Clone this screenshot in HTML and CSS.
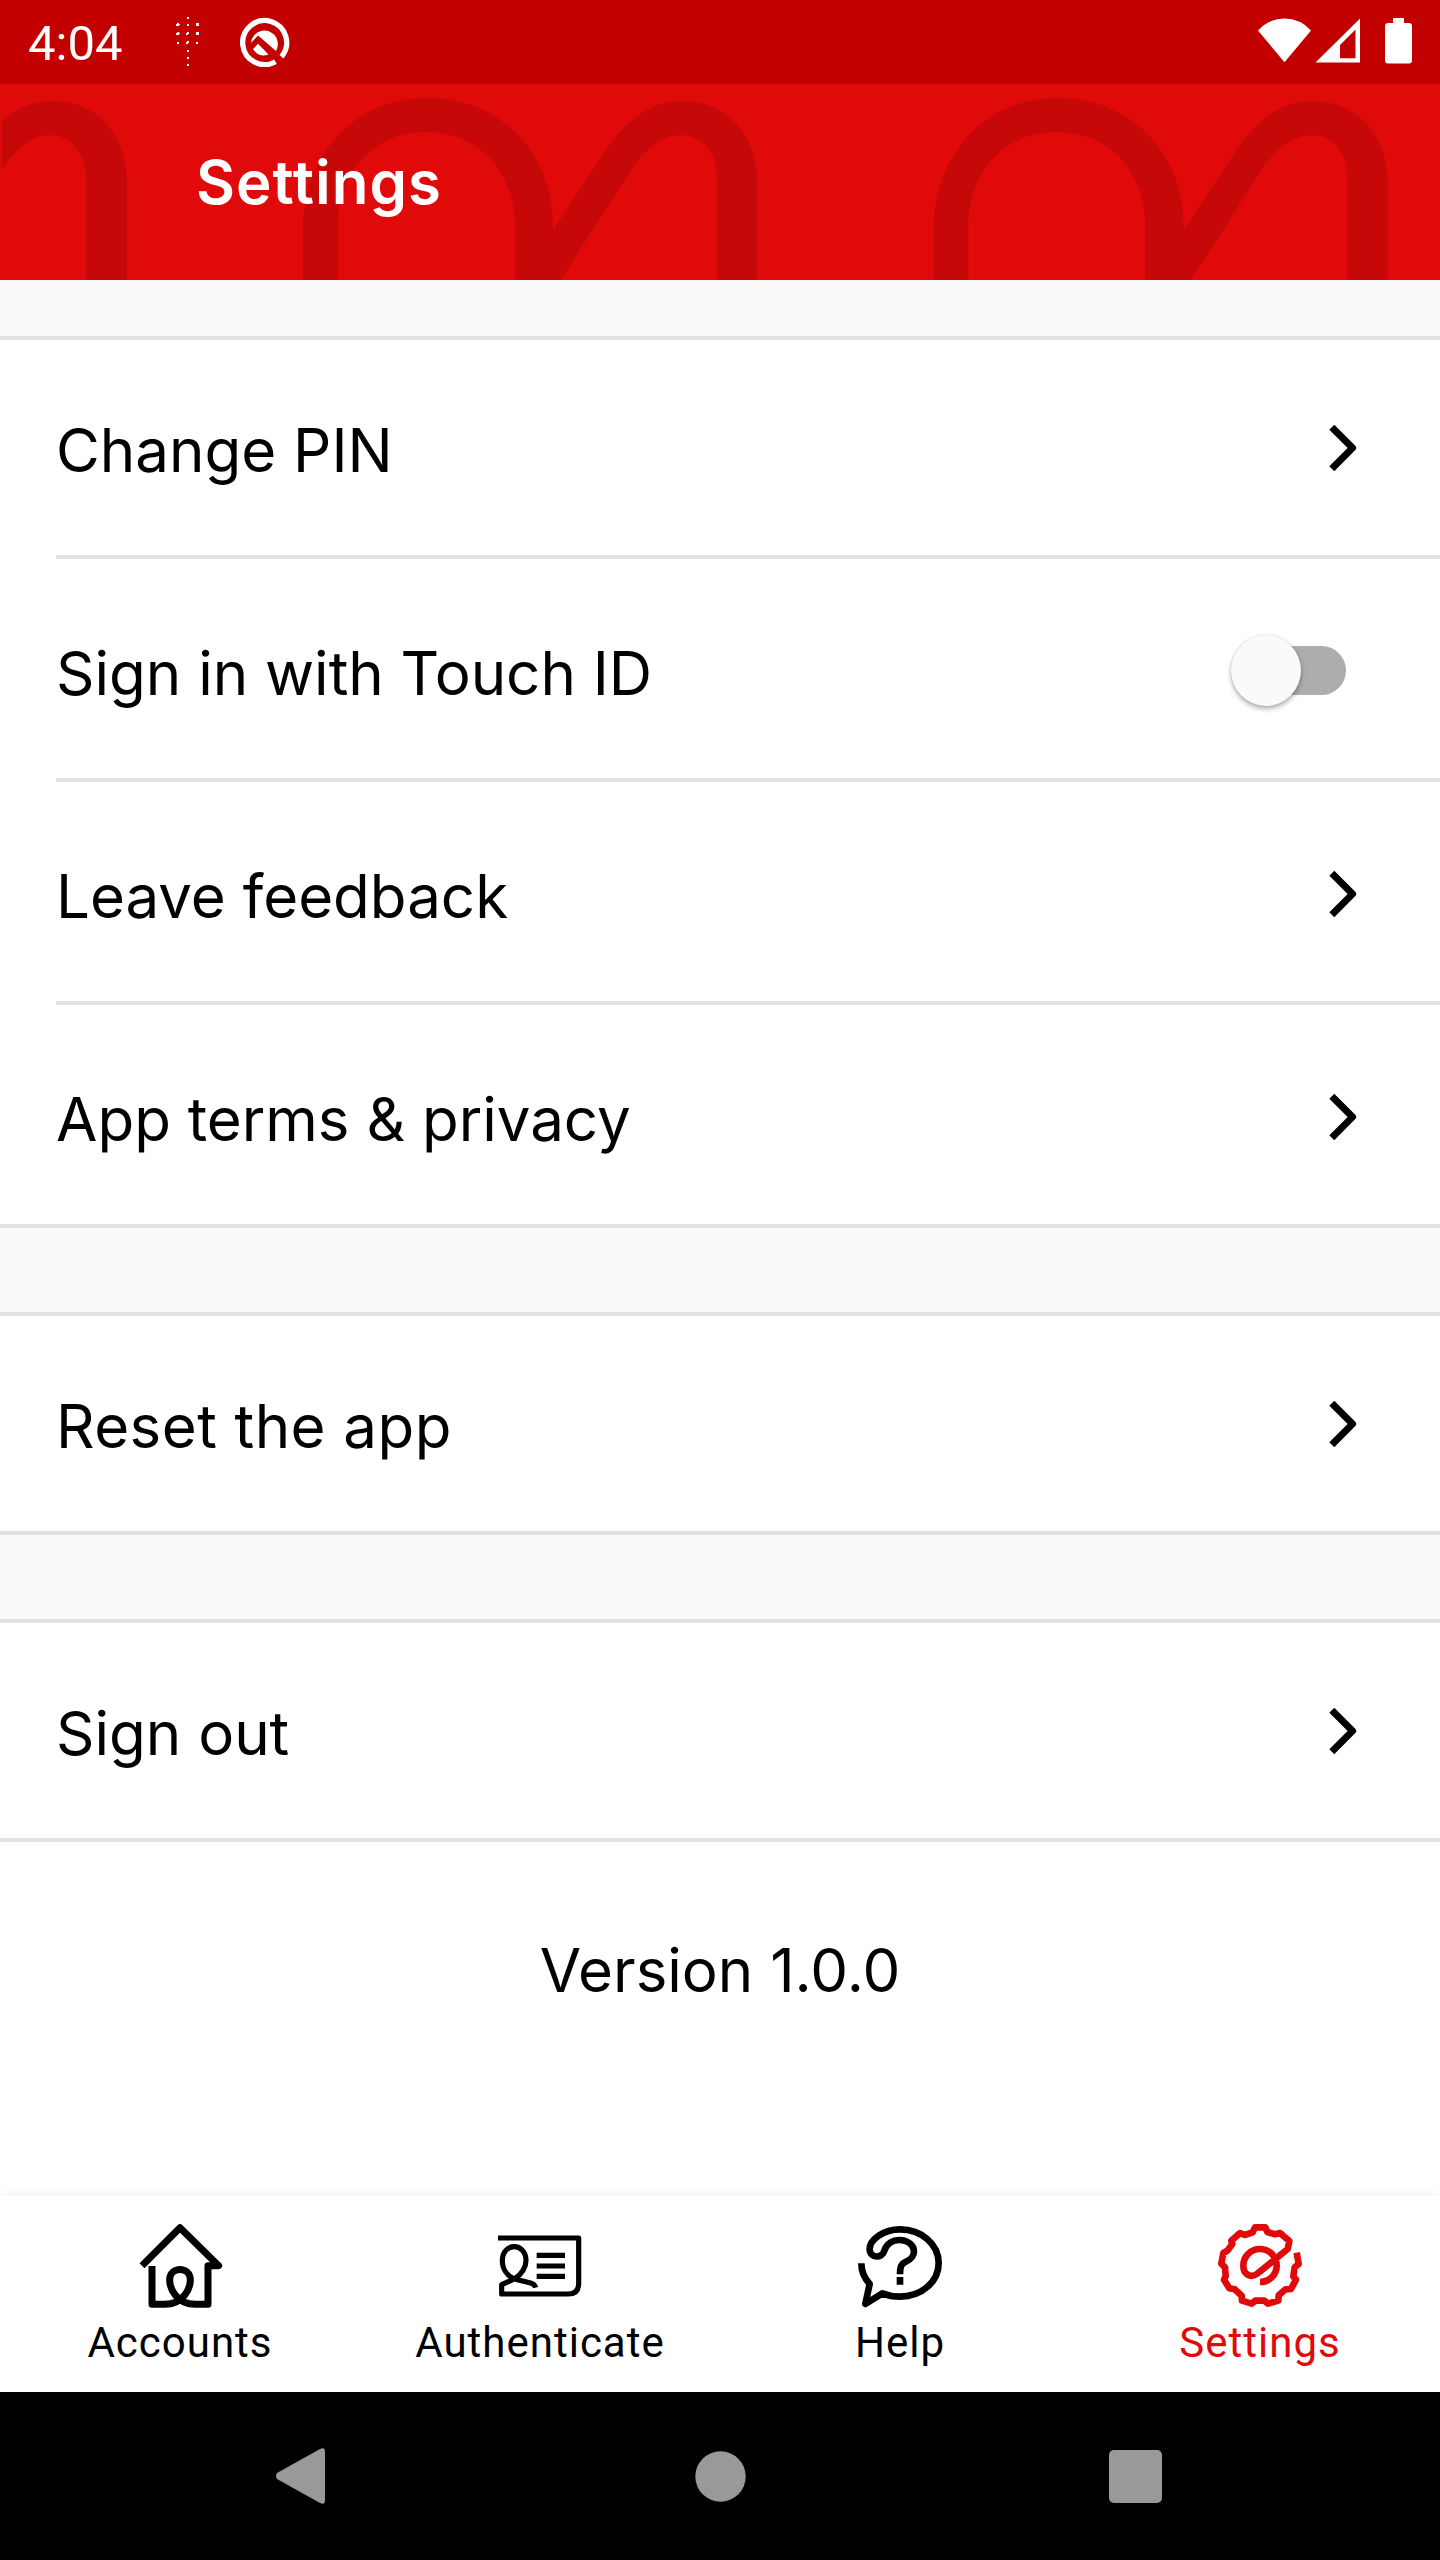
FILE: index.html
```html
<!DOCTYPE html>
<html lang="en">
<head>
<meta charset="utf-8">
<title>Settings</title>
<link rel="stylesheet" href="styles.css">
</head>
<body>
<div class="screen">
  <div class="status-bar">
    <span class="clock">4:04</span>
    <svg class="dots-icon" width="24" height="50" viewBox="0 0 24 50">
      <path d="M11 0h2v2h-2zM0 7h1v-1h2v1h1v1H3v1H0zM11 7h2v2h-2zM20 6h3v3h-3zM0 16h1v-1h2v1h1v1H3v1H0zM10 16h1v-1h2v2h-1v1h-2zM20 15h3v3h-3zM1 25h2v2H1zM10 25h1v-1h2v2h-1v1h-2zM20 25h2v2h-2zM11 33h2v2h-2zM11 40h2v2h-2zM11 47h2v2h-2z"/>
    </svg>
    <svg class="q-icon" width="50" height="50" viewBox="240 17 50 50">
      <path class="ring" d="M275.500 61.700A22 22 0 1 1 281.500 56.700"/>
      <path d="M251 43a13.500 13.500 0 0 1 25.500-5q3 7-.5 13L258 35.500zM258 43.800L268.500 54.500Q259 58 253 49z"/>
    </svg>
    <svg class="signal-icons" width="156" height="48" viewBox="1257 18 156 48">
      <path d="M1258 31.500Q1269 19.500 1284.500 19.500T1311 31.500L1284.500 63.300z"/>
      <path fill-rule="evenodd" d="M1315.500 63.500L1360 19.500V63.500zM1340 59.300H1355.500V30.500L1340 46z"/>
      <path d="M1393 19h11v5h5q3 0 3 3v34.500q0 3-3 3h-21q-3 0-3-3V27q0-3 3-3h5z"/>
    </svg>
  </div>
  <header class="app-header">
    <svg class="pattern" width="1440" height="196" viewBox="0 84 1440 196">
      <defs>
        <path id="arches" d="M303 280V230C303 160 350 98 427 98C505 98 553 158 553 224V230.500L602 156C622 125 647 101 682 101C729 101 757 138 757 181V280H717V177C717 153 702 135 681 135C662 135 645 149 631 170L560.500 280H515V226C515 176 483 132 426 132C371 132 337.700 175 337.700 226V280Z"/>
      </defs>
      <path d="M2 120.500C17 108 33 101 54 101C99 101 127 138 127 181V280H86V177C86 153 71 135 50 135C31 135 16 148 2 170Z"/>
      <use href="#arches"/>
      <use href="#arches" x="630.500"/>
    </svg>
    <h1 class="title">Settings</h1>
  </header>
  <main class="content">
    <section class="group">
      <div class="row"><span class="label">Change PIN</span><svg class="chevron" width="30" height="51" viewBox="0 0 30 51"><path d="M3.800 5.200L24.600 25.900 3.800 46.700"/></svg></div>
      <div class="row"><span class="label">Sign in with Touch ID</span><span class="switch"><span class="knob"></span></span></div>
      <div class="row"><span class="label">Leave feedback</span><svg class="chevron" width="30" height="51" viewBox="0 0 30 51"><path d="M3.800 5.200L24.600 25.900 3.800 46.700"/></svg></div>
      <div class="row"><span class="label">App terms &amp; privacy</span><svg class="chevron" width="30" height="51" viewBox="0 0 30 51"><path d="M3.800 5.200L24.600 25.900 3.800 46.700"/></svg></div>
    </section>
    <section class="group">
      <div class="row"><span class="label spaced">Reset the app</span><svg class="chevron" width="30" height="51" viewBox="0 0 30 51"><path d="M3.800 5.200L24.600 25.900 3.800 46.700"/></svg></div>
    </section>
    <section class="group">
      <div class="row"><span class="label">Sign out</span><svg class="chevron" width="30" height="51" viewBox="0 0 30 51"><path d="M3.800 5.200L24.600 25.900 3.800 46.700"/></svg></div>
    </section>
  </main>
  <footer class="version">Version 1.0.0</footer>
  <nav class="tabs">
    <a class="tab">
      <svg class="tab-icon" viewBox="174 132 252 252" stroke-width="21"><path d="M186 257L300 143L416 257H384V373H345C290 373 269 325 269 300C269 258 331 258 331 300C331 325 310 373 255 373H216V258"/></svg>
      <span>Accounts</span>
    </a>
    <a class="tab">
      <svg class="tab-icon" viewBox="294 132 252 252" stroke-width="15.500"><path d="M294 174H536V310Q536 342 505 342H305V314L343 297C366 283 378 260 378 242C378 186 307 186 307 242C307 266 321 287 343 297L392 309Q404 312 407 323M410 226H495M410 258H495M410 289H495"/></svg>
      <span>Authenticate</span>
    </a>
    <a class="tab">
      <svg class="tab-icon" viewBox="174 132 252 252" stroke-width="20"><path d="M184 250C184 280 196 298 209 312L196 372L247 340C262 346 280 350 300 350C365 350 416 305 416 249C416 193 365 148 300 148C250 148 209 180 209 207C209 236 247 236 253 212C260 190 280 180 297 180C325 180 342 197 342 214C342 234 327 241 316 246C303 252 300 262 300 283M300 291V314"/></svg>
      <span>Help</span>
    </a>
    <a class="tab active">
      <svg class="tab-icon" viewBox="174 132 252 252" stroke-width="20"><path d="M410 218L416 252L404 262L400 289L408 299L393 327L377 328L356 346L355 362L324 371L313 362H286L275 371L246 362L245 347L224 328L208 325L192 299L197 289L195 262L184 251L190 219L202 212L217 192L214 182L240 159L254 165L278 157L285 142H316L322 156L345 163L360 159L388 183L383 207L292 281C270 297 250 281 250 257C250 229 272 207 300 207C328 207 350 229 350 257C350 284 328 306 300 306"/></svg>
      <span>Settings</span>
    </a>
  </nav>
  <div class="system-nav">
    <svg width="49" height="56" viewBox="0 0 49 56"><path d="M1 25L44 1Q49-1.500 49 4V52Q49 57.500 44 55L1 31Q-1 28 1 25z"/></svg>
    <svg class="home" width="51" height="51" viewBox="0 0 51 51"><circle cx="25.500" cy="25.500" r="25.200"/></svg>
    <svg width="53" height="53" viewBox="0 0 53 53"><rect width="53" height="53" rx="5"/></svg>
  </div>
</div>
</body>
</html>
```

FILE: styles.css
```css
body {
  margin: 0;
  background: #fff;
}

.screen {
  width: 1440px;
  height: 2560px;
  display: flex;
  flex-direction: column;
  overflow: hidden;
  font-family: Inter, sans-serif;
  color: #000;
}

.screen svg {
  display: block;
  flex: none;
}

/* Status bar */
.status-bar {
  height: 84px;
  box-sizing: border-box;
  padding: 17px 27px 0 28px;
  display: flex;
  background: #c20000;
  color: #fff;
  fill: #fff;
}

.clock {
  width: 148px;
  font: 400 49px/54px Roboto, sans-serif;
}

.q-icon {
  margin-left: 40px;
}

.ring {
  fill: none;
  stroke: #fff;
  stroke-width: 5.3;
}

.signal-icons {
  margin-left: auto;
}

/* Header */
.app-header {
  height: 196px;
  display: grid;
  background: #e00a0a;
}

.pattern,
.title {
  grid-area: 1 / 1;
}

.pattern {
  fill: #c60808;
}

.title {
  margin: 0 0 0 196px;
  align-self: center;
  color: #fff;
  font-size: 60px;
  font-weight: 600;
  letter-spacing: 1px;
}

/* Settings list */
.content {
  padding-top: 56px;
  display: flex;
  flex-direction: column;
  gap: 84px;
  background: #fafafa;
}

.group {
  border-top: 4px solid #e2e2e2;
  border-bottom: 4px solid #e2e2e2;
  background: #fff;
}

.row {
  height: 215px;
  margin-left: 56px;
  padding-right: 82px;
  display: flex;
  align-items: center;
  justify-content: space-between;
  font-size: 60px;
}

.row + .row {
  padding-top: 4px;
  border-top: 4px solid #e2e2e2;
}

.label {
  padding-top: 5px;
}

.spaced {
  letter-spacing: 0.45px;
}

.chevron {
  fill: none;
  stroke: #000;
  stroke-width: 7;
  stroke-linejoin: round;
}

.switch {
  width: 106px;
  height: 49px;
  margin-right: 12px;
  display: flex;
  align-items: center;
  border-radius: 25px;
  background: #adadad;
}

.knob {
  width: 70px;
  height: 71px;
  margin-left: -9px;
  border-radius: 50%;
  background: #fafafa;
  box-shadow: 0 3px 5px rgba(0, 0, 0, 0.3), 0 0 3px rgba(0, 0, 0, 0.1);
}

.version {
  flex: 1;
  padding-top: 92px;
  text-align: center;
  font-size: 60px;
  line-height: 73px;
}

/* Bottom tabs */
.tabs {
  height: 196px;
  box-sizing: border-box;
  padding-top: 28px;
  display: grid;
  grid-template-columns: repeat(4, 1fr);
  background: #fff;
  box-shadow: 0 0 10px rgba(0, 0, 0, 0.08);
}

.tab {
  display: flex;
  flex-direction: column;
  align-items: center;
  font: 400 42px/50px Roboto, sans-serif;
  letter-spacing: 1px;
}

.tab span {
  margin-top: 10px;
}

.active {
  color: #e00a0a;
}

.tab-icon {
  width: 84px;
  height: 84px;
  overflow: visible;
  fill: none;
  stroke: currentColor;
  stroke-linejoin: round;
}

/* Android navigation */
.system-nav {
  height: 168px;
  box-sizing: border-box;
  padding: 0 278px 0 276px;
  display: flex;
  align-items: center;
  justify-content: space-between;
  background: #000;
  fill: #999;
}

.home {
  margin-left: 6px;
}
```
